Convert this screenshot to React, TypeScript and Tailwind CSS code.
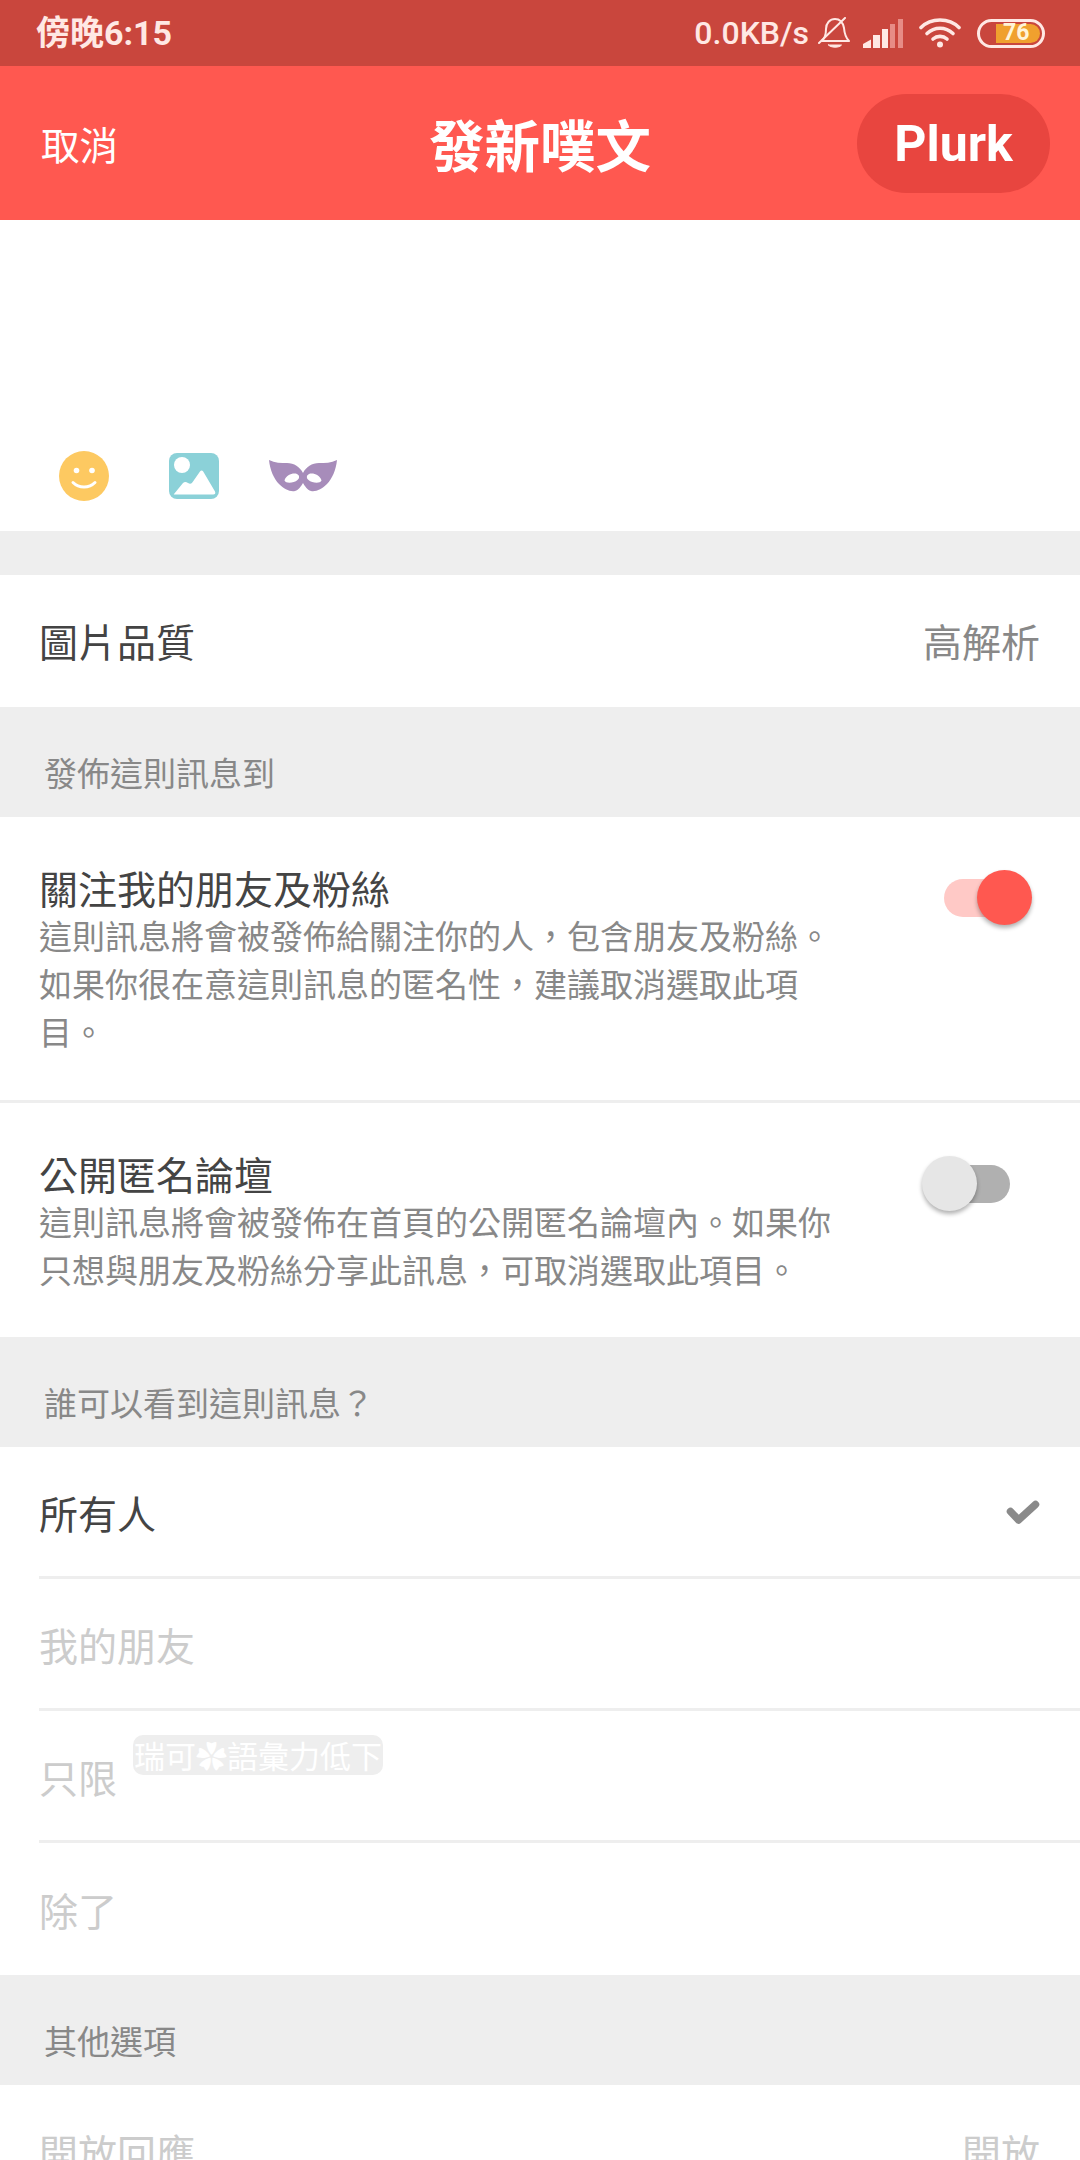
import React from "react";

const cjk = "font-['Noto_Sans_CJK_TC','Noto_Sans_CJK_JP',sans-serif]";

function BellOff() {
  return (
    <svg width="32" height="32" viewBox="0 0 32 32" fill="none" stroke="#ffe8e4" strokeWidth="2" strokeLinecap="round" strokeLinejoin="round">
      <path d="M4 24C7 21 8 17 8 12 8 6 12 2 17 2c5 0 8 4 9 9 .5 6 2 10 5 13z" />
      <path d="M1 26 27 1" />
      <path d="M10.500 28h13c-2 3-11 3-13 0z" fill="#ffe8e4" strokeWidth="1" />
    </svg>
  );
}

function Signal() {
  return (
    <svg width="40" height="29" viewBox="0 0 40 29">
      <path d="M0 29v-4L8 20.500V29z" fill="#ffe8e4" />
      <rect x="10" y="16" width="7" height="13" fill="#ffe8e4" />
      <rect x="19" y="10" width="6" height="19" fill="#ffe8e4" />
      <rect x="27" y="5" width="5" height="24" fill="#e78c86" />
      <rect x="35" y="0" width="5" height="29" fill="#e78c86" />
    </svg>
  );
}

function Wifi() {
  return (
    <svg width="42" height="30" viewBox="0 0 42 30" fill="none" stroke="#ffe8e4" strokeWidth="3.600" strokeLinecap="round">
      <path d="M2 9.500C12-.5 30-.5 40 9.500" />
      <path d="M8 15.500c7.500-7 18.500-7 26 0" />
      <path d="M14 21c4-3.500 10-3.500 14 0" />
      <circle cx="21" cy="26.500" r="3" fill="#ffe8e4" stroke="none" />
    </svg>
  );
}

function Battery() {
  return (
    <div className="relative w-[68px] h-[29px] rounded-full border-[3px] border-[#ffe8e4] flex items-center">
      <div className="absolute left-[16px] top-[2px] bottom-[2px] right-[2px] rounded-r-full bg-[#f0a02e]" />
      <span className="relative ml-[23px] text-[23px] leading-[22px] font-bold text-[#fff4d8] font-['Roboto',sans-serif]">76</span>
    </div>
  );
}

function Smile() {
  return (
    <svg width="50" height="50" viewBox="0 0 50 50">
      <circle cx="25" cy="25" r="25" fill="#fdc961" />
      <circle cx="17.500" cy="19.500" r="2.800" fill="#fff" />
      <circle cx="33" cy="19.500" r="2.800" fill="#fff" />
      <path d="M14 31.500c6 6 16 6 22 0" fill="none" stroke="#fff" strokeWidth="3" strokeLinecap="round" />
    </svg>
  );
}

function Picture() {
  return (
    <svg width="50" height="46" viewBox="0 0 50 46">
      <rect width="50" height="46" rx="8" fill="#8bd1d8" />
      <circle cx="13" cy="12" r="8" fill="#fff" />
      <path d="M5 41l9-11c1.500-1.500 3-1.500 5 0 1.800 1.200 3 1 4.300-.5L31 18.500c1-1.300 2.300-1.300 3.200 0l11.800 20c.8 1.800 0 3-1.800 3H6c-1.300 0-1.600-.5-1-.5z" fill="#fff" />
    </svg>
  );
}

function Mask() {
  return (
    <svg width="68" height="32" viewBox="0 0 68 32">
      <path
        fillRule="evenodd"
        fill="#a78cba"
        d="M0 0C6 3 12 3 18 3 25 3 31 7 34 13 37 7 43 3 50 3 56 3 62 3 68 0 67 10 63 19 58 24 53 29 47 32 42 31 38 30 36 26 34 23 32 26 30 30 26 31 21 32 15 29 10 24 5 19 1 10 0 0zM15.500 20.500C17 15 24 12.500 28 14 31 15.500 30.500 18.500 28.500 20 25 23 17 24 15.500 20.500zM52.500 20.500C51 15 44 12.500 40 14 37 15.500 37.500 18.500 39.500 20 43 23 51 24 52.500 20.500z"
      />
    </svg>
  );
}

function Check() {
  return (
    <svg width="34" height="26" viewBox="0 0 34 26" fill="none" stroke="#8a8a8a" strokeWidth="7.500" strokeLinecap="round" strokeLinejoin="round" className="mt-[2px]">
      <path d="M4.500 11.500 12.500 20 29.500 4.500" />
    </svg>
  );
}

function Toggle({ on }: { on: boolean }) {
  return (
    <div className={`relative mt-[16px] w-[66px] h-[38px] rounded-full ${on ? "bg-[#ffc9c6]" : "bg-[#b0b0b0]"}`}>
      <div
        className={`absolute top-[-9px] w-[55px] h-[55px] rounded-full shadow-[0_3px_4px_rgba(0,0,0,0.3)] ${
          on ? "left-[33px] bg-[#ff5850]" : "left-[-22px] bg-[#e6e6e6]"
        }`}
      />
    </div>
  );
}

function SectionHead({ children }: { children: React.ReactNode }) {
  return (
    <div className="h-[110px] bg-[#eeeeee] flex items-end pl-[44px] pb-[21px] text-[33px] leading-[48px] text-[#888888]">
      {children}
    </div>
  );
}

function ToggleRow({ title, desc, on, tail }: { title: string; desc: string; on: boolean; tail: string }) {
  return (
    <div className={`flex justify-between bg-white pl-[39px] pr-[70px] pt-[46px] ${tail}`}>
      <div className="w-[800px]">
        <div className="text-[39px] leading-[48px] text-[#444444]">{title}</div>
        <div className="text-[33px] leading-[48px] text-[#888888]">{desc}</div>
      </div>
      <Toggle on={on} />
    </div>
  );
}

function ListRow({ label, active, last, children }: { label: string; active?: boolean; last?: boolean; children?: React.ReactNode }) {
  return (
    <div className={`ml-[39px] h-[132px] flex items-center justify-between pr-[40px] ${last ? "" : "border-b-[3px] border-[#eeeeee]"}`}>
      <span className={`text-[39px] leading-[48px] ${active ? "text-[#444444]" : "text-[#cccccc]"}`}>{label}</span>
      {children}
    </div>
  );
}

export default function App() {
  return (
    <div className={`w-[1080px] h-[2160px] overflow-hidden bg-white ${cjk}`}>
      <div className="h-[66px] bg-[#c9463d] flex items-center justify-between pl-[36px] pr-[35px] text-[#ffe8e4]">
        <span className="text-[34px] leading-[40px] font-bold font-['Roboto','Noto_Sans_CJK_TC',sans-serif]">傍晚6:15</span>
        <div className="flex items-center">
          <span className="text-[32px] leading-[40px] font-medium font-['Roboto',sans-serif]">0.0KB/s</span>
          <span className="ml-[9px]"><BellOff /></span>
          <span className="ml-[13px]"><Signal /></span>
          <span className="ml-[16px]"><Wifi /></span>
          <span className="ml-[16px]"><Battery /></span>
        </div>
      </div>

      <div className="h-[154px] bg-[#ff5850] flex items-center px-[30px] text-white">
        <div className="flex-1 text-[38.500px] leading-[48px]"><span className="ml-[11px]">取消</span></div>
        <div className="text-[55.500px] leading-[64px] font-bold">發新噗文</div>
        <div className="flex-1 flex justify-end">
          <button className="w-[193px] h-[99px] pt-[3px] rounded-[50px] bg-[#e8453f] text-[50px] font-bold font-['Roboto',sans-serif] text-white">Plurk</button>
        </div>
      </div>

      <div className="h-[311px] pt-[231px] pl-[59px] flex items-start">
        <div className="h-[50px] flex items-center">
          <Smile />
          <span className="ml-[60px]"><Picture /></span>
          <span className="ml-[50px]"><Mask /></span>
        </div>
      </div>
      <div className="h-[44px] bg-[#eeeeee]" />

      <div className="h-[132px] flex items-center justify-between pl-[39px] pr-[40px] pb-[3px]">
        <span className="text-[39px] leading-[48px] text-[#444444]">圖片品質</span>
        <span className="text-[39px] leading-[48px] text-[#888888]">高解析</span>
      </div>

      <SectionHead>發佈這則訊息到</SectionHead>
      <ToggleRow
        on
        tail="pb-[45px] border-b-[3px] border-[#eeeeee]"
        title="關注我的朋友及粉絲"
        desc="這則訊息將會被發佈給關注你的人，包含朋友及粉絲。如果你很在意這則訊息的匿名性，建議取消選取此項目。"
      />
      <ToggleRow
        on={false}
        tail="pb-[44px]"
        title="公開匿名論壇"
        desc="這則訊息將會被發佈在首頁的公開匿名論壇內。如果你只想與朋友及粉絲分享此訊息，可取消選取此項目。"
      />
      <SectionHead>誰可以看到這則訊息？</SectionHead>

      <ListRow label="所有人" active><Check /></ListRow>
      <ListRow label="我的朋友" />
      <div className="relative">
        <ListRow label="只限" />
        <div className="absolute left-[133px] top-[24px] w-[250px] h-[40px] rounded-[10px] bg-[#eeeeee] text-white text-[31px] leading-[40px] text-center whitespace-nowrap">瑞可✿語彙力低下</div>
      </div>
      <ListRow label="除了" last />

      <SectionHead>其他選項</SectionHead>

      <div className="h-[132px] flex items-center justify-between pl-[39px] pr-[40px]">
        <span className="text-[39px] leading-[48px] text-[#cccccc]">開放回應</span>
        <span className="text-[39px] leading-[48px] text-[#cccccc]">開放</span>
      </div>
    </div>
  );
}
